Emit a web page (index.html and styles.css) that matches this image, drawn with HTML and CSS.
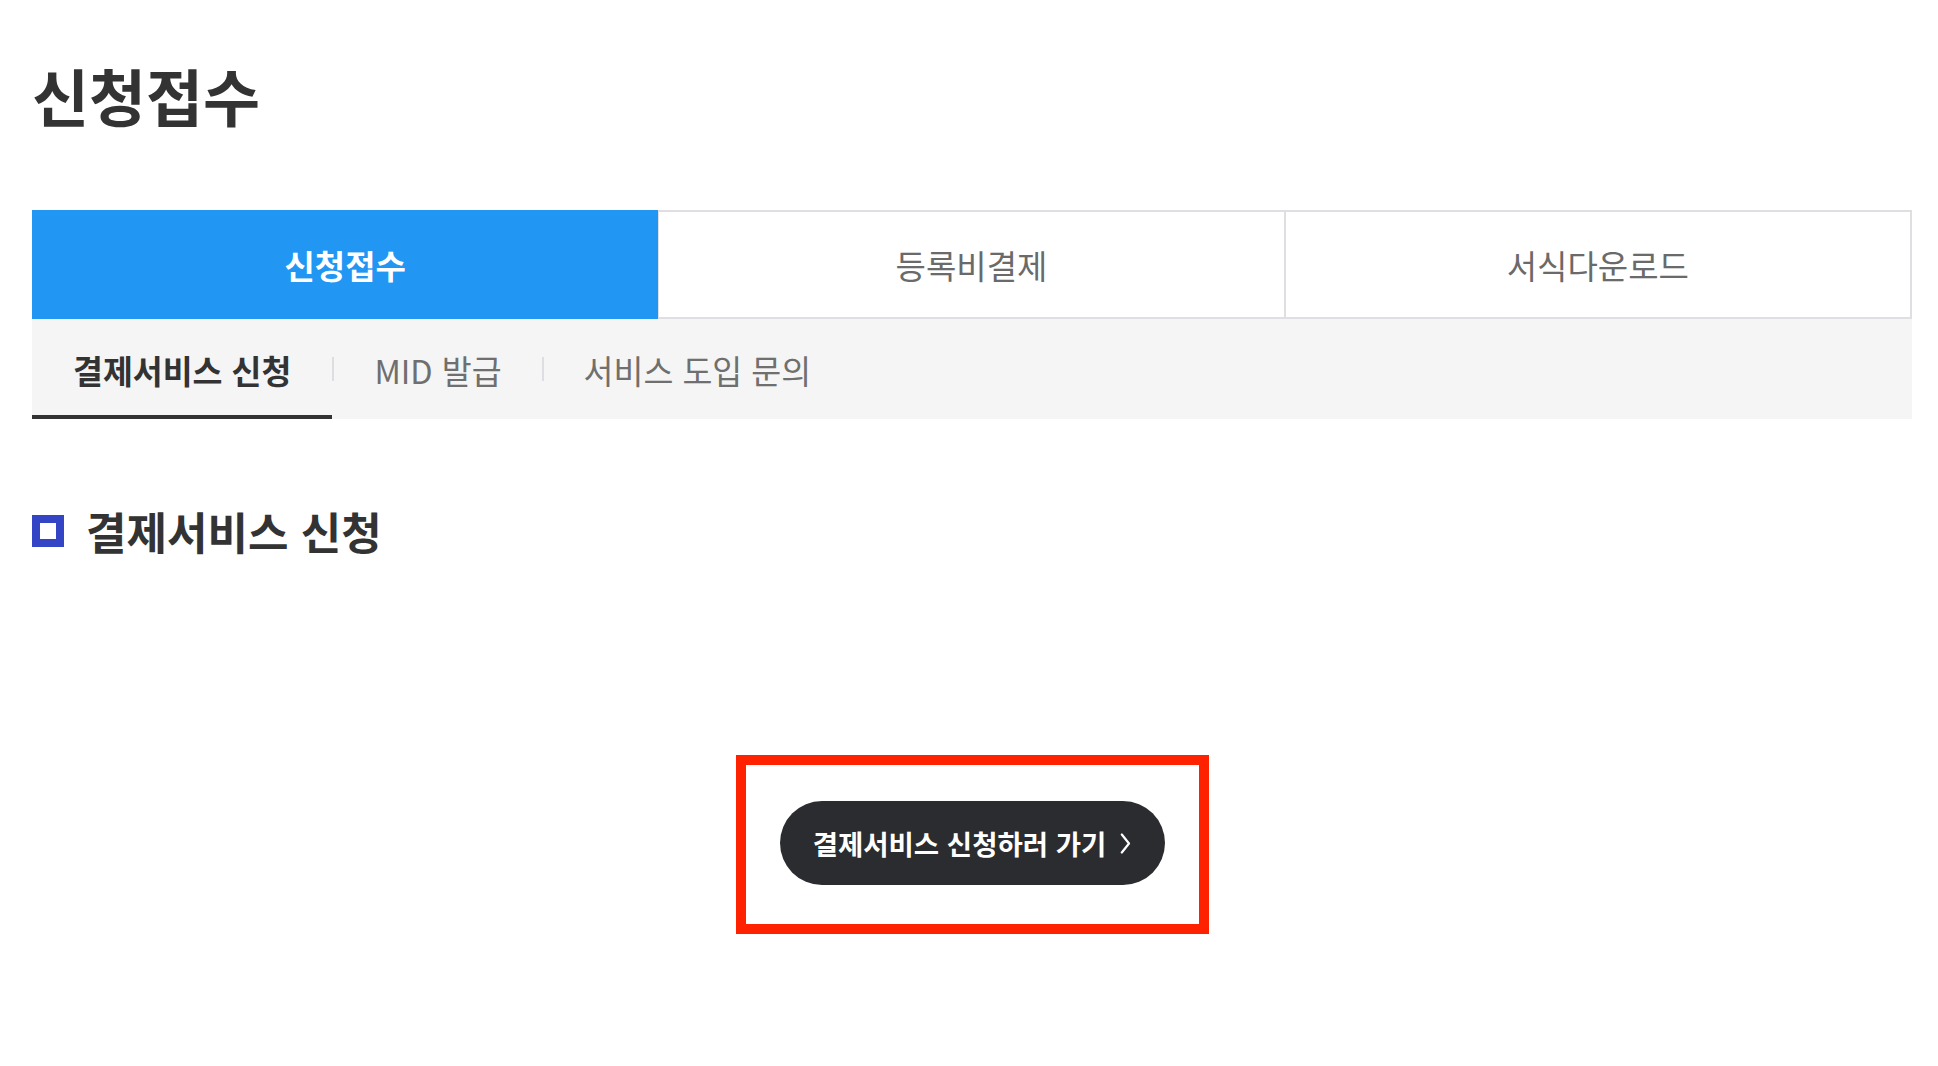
FILE: index.html
```html
<!DOCTYPE html>
<html lang="ko">
<head>
<meta charset="utf-8">
<title>신청접수</title>
<link rel="stylesheet" href="styles.css">
</head>
<body>
<div class="page">
  <h1 class="title">신청접수</h1>
  <nav class="tabs">
    <a class="tab active">신청접수</a>
    <a class="tab">등록비결제</a>
    <a class="tab">서식다운로드</a>
  </nav>
  <nav class="subnav">
    <a class="sub active">결제서비스 신청</a>
    <span class="sep"></span>
    <a class="sub">MID 발급</a>
    <span class="sep"></span>
    <a class="sub">서비스 도입 문의</a>
  </nav>
  <h2 class="section-title"><span class="bullet"></span>결제서비스 신청</h2>
  <div class="cta-wrap">
    <div class="highlight">
      <a class="cta">결제서비스 신청하러 가기<svg class="chev" viewBox="0 0 11 21" width="11" height="21"><path d="M1.8 1.5 L9 10.5 L1.8 19.5" fill="none" stroke="#fff" stroke-width="2.2" stroke-linecap="round" stroke-linejoin="round"/></svg></a>
    </div>
  </div>
</div>
</body>
</html>
```

FILE: styles.css
```css
html, body {
  margin: 0;
  padding: 0;
  background: #fff;
}
body {
  font-family: "Noto Sans CJK KR", "Noto Sans", sans-serif;
  color: #333;
}
.page {
  padding: 0 26px 0 32px;
}
.title {
  margin: 0;
  height: 210px;
  box-sizing: border-box;
  padding-top: 58px;
  font-size: 62px;
  line-height: 74px;
  font-weight: 700;
  color: #333;
}
.tabs {
  display: flex;
  height: 109px;
}
.tab {
  flex: 1 1 0;
  display: flex;
  align-items: center;
  justify-content: center;
  box-sizing: border-box;
  border: 2px solid #dfdfe3;
  border-left-width: 1px;
  border-right-width: 1px;
  font-size: 33px;
  color: #6a6a6a;
}
.tab:last-child {
  border-right-width: 2px;
}
.tab.active {
  background: #2196f3;
  border-color: #2196f3;
  color: #fff;
  font-weight: 700;
}
.subnav {
  display: flex;
  align-items: center;
  height: 100px;
  background: #f5f5f5;
}
.sub {
  height: 100%;
  display: flex;
  align-items: center;
  box-sizing: border-box;
  padding: 0 40px;
  font-size: 32.5px;
  color: #6f6f6f;
}
.sub.active {
  color: #333;
  font-weight: 700;
  padding: 4px 41px 0;
  border-bottom: 4px solid #333;
}
.sep {
  width: 2px;
  height: 24px;
  background: #dedee2;
}
.section-title {
  display: flex;
  align-items: center;
  gap: 22px;
  margin: 87px 0 0;
  height: 50px;
  font-size: 44px;
  font-weight: 700;
  color: #333;
}
.bullet {
  width: 16px;
  height: 16px;
  flex: none;
  border: 8px solid #3344c4;
  background: #fff;
}
.cta-wrap {
  display: flex;
  justify-content: center;
  margin-top: 199px;
}
.highlight {
  border: 10px solid #ff2200;
  padding: 36px 34px 39px 34px;
}
.cta {
  display: flex;
  align-items: center;
  justify-content: center;
  gap: 14px;
  width: 385px;
  height: 84px;
  box-sizing: border-box;
  border-radius: 42px;
  background: #2b2c2f;
  color: #fff;
  font-size: 27.5px;
  font-weight: 700;
}
.chev {
  display: block;
}
```
